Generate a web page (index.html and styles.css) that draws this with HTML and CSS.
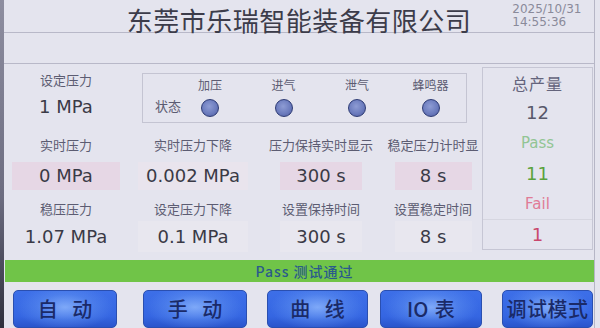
FILE: index.html
```html
<!DOCTYPE html>
<html lang="zh">
<head>
<meta charset="utf-8">
<title>东莞市乐瑞智能装备有限公司</title>
<link rel="stylesheet" href="styles.css">
</head>
<body>
<div class="frame">
  <div class="edge"></div>
  <div class="screen">
    <header class="header">
      <div></div>
      <h1 class="title">东莞市乐瑞智能装备有限公司</h1>
      <div class="datetime">
        <div>2025/10/31</div>
        <div>14:55:36</div>
      </div>
    </header>
    <div class="band"></div>
    <main class="main">
      <section class="grid">
        <div class="cell-set">
          <div class="label">设定压力</div>
          <div class="value">1 MPa</div>
        </div>
        <div class="status">
          <div class="status-label">状态</div>
          <div class="status-items">
            <div class="status-item"><div class="label small">加压</div><span class="lamp"></span></div>
            <div class="status-item"><div class="label small">进气</div><span class="lamp"></span></div>
            <div class="status-item"><div class="label small">泄气</div><span class="lamp"></span></div>
            <div class="status-item"><div class="label small">蜂鸣器</div><span class="lamp"></span></div>
          </div>
        </div>

        <div class="label row-label">实时压力</div>
        <div class="label row-label">实时压力下降</div>
        <div class="label row-label">压力保持实时显示</div>
        <div class="label row-label">稳定压力计时显</div>

        <div class="box pink w1">0 MPa</div>
        <div class="box light w2">0.002 MPa</div>
        <div class="box pink w3">300 s</div>
        <div class="box pink w4">8 s</div>

        <div class="label row-label">稳压压力</div>
        <div class="label row-label">设定压力下降</div>
        <div class="label row-label">设置保持时间</div>
        <div class="label row-label">设置稳定时间</div>

        <div class="box2 plain w1">1.07 MPa</div>
        <div class="box2 faint w2">0.1 MPa</div>
        <div class="box2 faint w3">300 s</div>
        <div class="box2 faint w4">8 s</div>
      </section>
      <aside class="panel">
        <div class="p-row p-head">总产量</div>
        <div class="p-row p-num">12</div>
        <div class="p-row p-pass">Pass</div>
        <div class="p-row p-num green">11</div>
        <div class="p-row p-fail">Fail</div>
        <div class="p-row p-num red sep">1</div>
      </aside>
    </main>
    <div class="result">Pass 测试通过</div>
    <nav class="buttons">
      <div class="btn b1 spaced">自 动</div>
      <div class="btn b2 spaced">手 动</div>
      <div class="btn b3 spaced">曲 线</div>
      <div class="btn b4">IO 表</div>
      <div class="btn b5">调试模式</div>
    </nav>
  </div>
</div>
</body>
</html>
```

FILE: styles.css
```css
* { box-sizing: border-box; margin: 0; padding: 0; }
html, body {
  width: 600px;
  height: 328px;
  overflow: hidden;
  background: #e4e4ee;
}
body {
  font-family: "Noto Sans CJK SC", "Noto Sans", sans-serif;
  color: #3a3a48;
}
.frame {
  display: flex;
  width: 600px;
  height: 328px;
}
.edge {
  width: 4px;
  flex: none;
  background: linear-gradient(180deg, #8e8ea0 0%, #6c6c80 60%, #2e2e3c 100%);
}
.screen {
  width: 591px;
  flex: none;
  display: flex;
  flex-direction: column;
  border-right: 1px solid #b6b6c6;
}
.header {
  height: 33px;
  display: grid;
  grid-template-columns: 1fr auto 1fr;
  border-bottom: 1px solid #b8b8c8;
}
.title {
  font-size: 26px;
  font-weight: 400;
  letter-spacing: 0.5px;
  line-height: 26px;
  padding-top: 7px;
  color: #3c3c4a;
  white-space: nowrap;
}
.datetime {
  padding-left: 41px;
  padding-top: 3px;
  font-family: "DejaVu Sans", sans-serif;
  font-size: 12px;
  line-height: 12.5px;
  color: #8a8a9a;
}
.band {
  height: 31px;
  border-bottom: 1px solid #b8b8c8;
}
.main {
  display: flex;
  height: 194px;
}
.grid {
  width: 478px;
  padding-left: 8px;
  display: grid;
  grid-template-columns: 108px 126px 110px 94px;
  grid-template-rows: 72px 18px 46px 18px 36px;
  column-gap: 10px;
}
.label {
  font-size: 13px;
  line-height: 18px;
  color: #5c5c72;
  text-align: center;
  white-space: nowrap;
}
.cell-set {
  padding-top: 7px;
  display: flex;
  flex-direction: column;
  align-items: center;
}
.value {
  font-family: "DejaVu Sans", sans-serif;
  font-size: 18px;
  line-height: 22px;
  margin-top: 7px;
  color: #3a3a46;
}
.status {
  grid-column: 2 / 5;
  margin-top: 9px;
  margin-left: 12px;
  width: 325px;
  height: 50px;
  border: 1px solid #c4c4d2;
  display: flex;
  align-items: flex-start;
  padding-left: 12px;
}
.status-label {
  width: 27px;
  margin-top: 23px;
  font-size: 13px;
  line-height: 18px;
  color: #5c5c72;
}
.status-items {
  display: flex;
  gap: 23.5px;
  margin-left: 3px;
}
.status-item {
  width: 50px;
  display: flex;
  flex-direction: column;
  align-items: center;
  padding-top: 2px;
}
.label.small { font-size: 12px; line-height: 18px; }
.lamp {
  display: block;
  width: 18px;
  height: 18px;
  margin-top: 5px;
  border-radius: 50%;
  border: 1.5px solid #2c3a74;
  background: radial-gradient(circle at 45% 40%, #8e9cd4 0%, #6c7cbe 55%, #4c5a9e 100%);
}
.row-label { align-self: center; }
.box, .box2 {
  justify-self: center;
  font-family: "DejaVu Sans", sans-serif;
  font-size: 18px;
  color: #3a3a46;
  display: flex;
  align-items: center;
  justify-content: center;
  white-space: nowrap;
}
.box {
  margin-top: 8px;
  height: 28px;
  align-self: start;
}
.box2 {
  margin-top: 3px;
  height: 31px;
  align-self: start;
}
.w1 { width: 108px; }
.w2 { width: 110px; }
.w3 { width: 82px; }
.w4 { width: 77px; }
.pink { background: #e6d7e5; }
.light { background: #e9e4ed; }
.plain { background: transparent; }
.faint { background: #e8e7ef; }
.panel {
  margin-top: 3px;
  width: 111px;
  height: 183px;
  border: 1px solid #c6c6d4;
  display: flex;
  flex-direction: column;
}
.p-row {
  height: 30.5px;
  display: flex;
  align-items: center;
  justify-content: center;
}
.p-head {
  font-size: 16px;
  letter-spacing: 1px;
  color: #64647c;
}
.p-num {
  font-family: "DejaVu Sans", sans-serif;
  font-size: 18px;
  color: #58586a;
}
.p-pass {
  font-family: "DejaVu Sans", sans-serif;
  font-size: 15px;
  color: #92c594;
}
.p-fail {
  font-family: "DejaVu Sans", sans-serif;
  font-size: 15px;
  color: #e07b96;
}
.green { color: #5aa23c; }
.red { color: #c9476c; }
.sep { border-top: 1px solid #d6d6e0; }
.result {
  margin-top: 4px;
  margin-left: 1px;
  height: 22px;
  background: #70c448;
  color: #2a5a8c;
  font-size: 14px;
  font-weight: 500;
  line-height: 22px;
  letter-spacing: 1px;
  text-align: center;
  padding-left: 10px;
}
.buttons {
  display: flex;
  margin-top: 8px;
  padding-left: 9px;
}
.btn {
  height: 38px;
  flex: none;
  border-radius: 5px;
  border: 1px solid #2a4fb0;
  background:
    radial-gradient(ellipse 60% 80% at 50% 45%, rgba(150,190,255,0.75) 0%, rgba(110,160,245,0.35) 45%, rgba(60,110,230,0) 80%),
    linear-gradient(180deg, #3d6fe8 0%, #3566e2 70%, #2a55cc 100%);
  color: #1a2a68;
  font-size: 20px;
  font-weight: 500;
  line-height: 36px;
  text-align: center;
  white-space: nowrap;
}
.spaced { word-spacing: 10px; }
.b1 { width: 104px; }
.b2 { width: 104px; margin-left: 26px; }
.b3 { width: 101px; margin-left: 20px; }
.b4 { width: 102px; margin-left: 12px; word-spacing: 2px; }
.b5 { width: 91px; margin-left: 20px; letter-spacing: 0.5px; }
```
